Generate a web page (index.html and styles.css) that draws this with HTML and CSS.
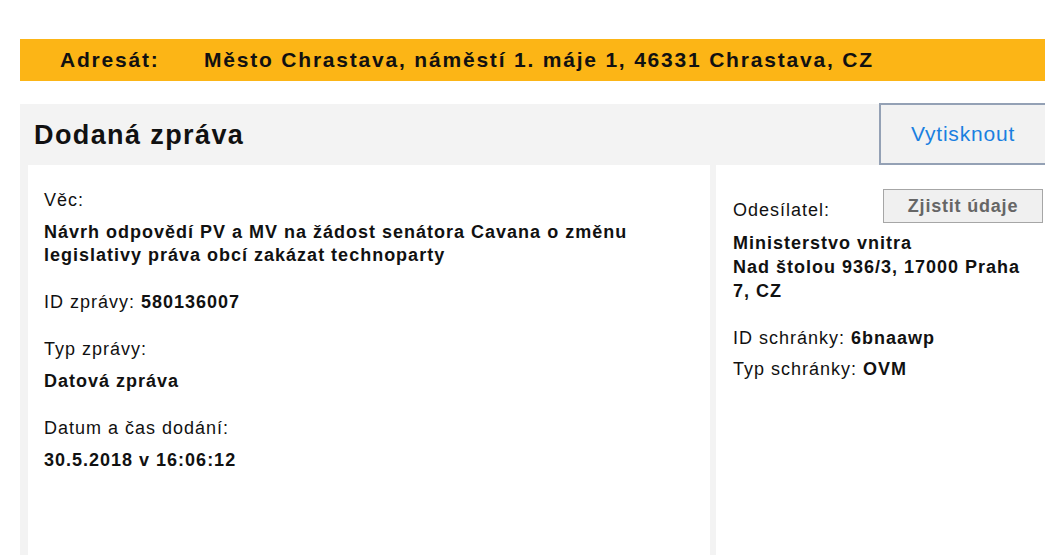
FILE: index.html
```html
<!DOCTYPE html>
<html lang="cs">
<head>
  <meta charset="UTF-8">
  <title>Dodaná zpráva</title>
  <link rel="stylesheet" href="styles.css">
</head>
<body>
  <div class="page">
    <div class="addressee">
      <span class="addressee-label">Adresát:</span>
      <span class="addressee-value">Město Chrastava, náměstí 1. máje 1, 46331 Chrastava, CZ</span>
    </div>

    <div class="message">
      <div class="message-head">
        <h1>Dodaná zpráva</h1>
        <button class="print-btn">Vytisknout</button>
      </div>

      <div class="message-body">
        <div class="card card-main">
          <div class="field">
            <div class="label">Věc:</div>
            <div class="value">Návrh odpovědí PV a MV na žádost senátora Cavana o změnu legislativy práva obcí zakázat technoparty</div>
          </div>
          <div class="field">
            <div class="label">ID zprávy: <b>580136007</b></div>
          </div>
          <div class="field">
            <div class="label">Typ zprávy:</div>
            <div class="value">Datová zpráva</div>
          </div>
          <div class="field">
            <div class="label">Datum a čas dodání:</div>
            <div class="value">30.5.2018 v 16:06:12</div>
          </div>
        </div>

        <div class="card card-sender">
          <div class="sender-row">
            <span class="label">Odesílatel:</span>
            <button class="lookup-btn">Zjistit údaje</button>
          </div>
          <div class="sender-address">Ministerstvo vnitra<br>Nad štolou 936/3, 17000 Praha 7, CZ</div>
          <div class="box-info">
            <div>ID schránky: <b>6bnaawp</b></div>
            <div>Typ schránky: <b>OVM</b></div>
          </div>
        </div>
      </div>
    </div>
  </div>
</body>
</html>
```

FILE: styles.css
```css
body, html {
  margin: 0;
  background-color: white;
  font-family: "Liberation Sans", Arial, sans-serif;
  color: #111;
  overflow: hidden;
}

.page {
  padding: 39px 0 0 20px;
}

.addressee {
  background-color: #fcb516;
  height: 42px;
  display: flex;
  align-items: center;
  padding-left: 40px;
  font-size: 21px;
  font-weight: bold;
  letter-spacing: 1.8px;
}

.addressee-label {
  width: 144px;
}

.message {
  margin-top: 23px;
  background-color: #f3f3f3;
}

.message-head {
  display: flex;
  justify-content: space-between;
  align-items: stretch;
  height: 61px;
}

.message-head h1 {
  margin: 0;
  padding-left: 14px;
  font-size: 27px;
  letter-spacing: 1.4px;
  line-height: 62px;
}

.print-btn {
  width: 168px;
  margin-top: -1px;
  margin-right: -2px;
  background-color: #f2f2f2;
  border: 2px solid #94a1b5;
  color: #1a7fe0;
  font-family: "Liberation Sans", Arial, sans-serif;
  font-size: 21px;
  letter-spacing: 0.8px;
  padding: 0;
}

.message-body {
  display: flex;
  gap: 6px;
  padding-left: 8px;
}

.card {
  background-color: white;
  min-height: 400px;
  font-size: 18px;
  letter-spacing: 1px;
  line-height: 23px;
}

.card-main {
  width: 650px;
  padding: 24px 16px 0 16px;
}

.card-sender {
  flex: 1;
  padding: 24px 2px 0 17px;
}

.field {
  margin-bottom: 24px;
}

.label {
  margin-bottom: 9px;
}

.value {
  font-weight: bold;
}

b {
  font-weight: bold;
}

.sender-row {
  display: flex;
  justify-content: space-between;
  align-items: center;
}

.sender-row .label {
  margin: 9px 0 0 0;
}

.lookup-btn {
  width: 160px;
  height: 34px;
  background-color: #f0f0f0;
  border: 1px solid #a6a6a6;
  color: #666;
  font-family: "Liberation Sans", Arial, sans-serif;
  font-size: 18px;
  font-weight: bold;
  letter-spacing: 0.8px;
  padding: 0;
}

.sender-address {
  margin-top: 8px;
  max-width: 300px;
  font-weight: bold;
  line-height: 24px;
}

.box-info {
  margin-top: 20px;
  line-height: 31px;
}
```
